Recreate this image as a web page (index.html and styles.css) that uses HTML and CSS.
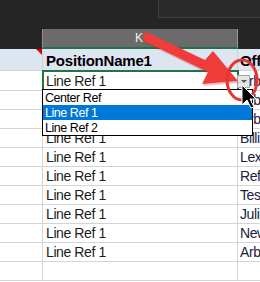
FILE: index.html
```html
<!DOCTYPE html>
<html lang="en">
<head>
    <meta charset="UTF-8">
    <meta name="viewport" content="width=device-width, initial-scale=1.0">
    <link rel="stylesheet" href="styles.css">
    <title>Lista desplegable</title>
</head>
<body>
    <div class="sheet">

        <!-- zona oscura de arriba -->
        <div class="topbar">
            <div class="topbox"></div>
        </div>

        <!-- cabeceras de columna -->
        <div class="colheads">
            <div class="ch ch-j"></div>
            <div class="ch ch-k">K</div>
            <div class="ch ch-l"></div>
        </div>

        <!-- filas -->
        <div class="grid">
            <div class="row row-head">
                <div class="cell cj"><span class="comment"></span></div>
                <div class="cell ck">PositionName1</div>
                <div class="cell cl">Office</div>
            </div>
            <div class="row row-sel">
                <div class="cell cj"></div>
                <div class="cell ck selected">Line Ref 1</div>
                <div class="cell cl">Arbor</div>
            </div>
            <!-- estas dos quedan tapadas por la lista -->
            <div class="row"><div class="cell cj"></div><div class="cell ck"></div><div class="cell cl">Arbor</div></div>
            <div class="row"><div class="cell cj"></div><div class="cell ck"></div><div class="cell cl">Arbor</div></div>
            <div class="row"><div class="cell cj"></div><div class="cell ck">Line Ref 1</div><div class="cell cl">Billing</div></div>
            <div class="row"><div class="cell cj"></div><div class="cell ck">Line Ref 1</div><div class="cell cl">Lexington</div></div>
            <div class="row"><div class="cell cj"></div><div class="cell ck">Line Ref 1</div><div class="cell cl">Reference</div></div>
            <div class="row"><div class="cell cj"></div><div class="cell ck">Line Ref 1</div><div class="cell cl">Testing</div></div>
            <div class="row"><div class="cell cj"></div><div class="cell ck">Line Ref 1</div><div class="cell cl">Julie</div></div>
            <div class="row"><div class="cell cj"></div><div class="cell ck">Line Ref 1</div><div class="cell cl">Newton</div></div>
            <div class="row"><div class="cell cj"></div><div class="cell ck">Line Ref 1</div><div class="cell cl">Arbor</div></div>
            <div class="row"><div class="cell cj"></div><div class="cell ck"></div><div class="cell cl"></div></div>
        </div>

        <!-- boton del desplegable -->
        <div class="dropbtn"><span class="tri"></span></div>

        <!-- lista abierta -->
        <ul class="droplist">
            <li>Center Ref</li>
            <li class="active">Line Ref 1</li>
            <li>Line Ref 2</li>
        </ul>

        <!-- flecha, circulo y puntero -->
        <svg class="marks" width="260" height="282" viewBox="0 0 260 282">
            <path d="M146 32 L205 60 L213 51 L238 81 L202 84 L208 72 L148 43 A6 6 0 0 1 146 32 Z" fill="#a02020" opacity="0.25" transform="translate(1 2)"/>
            <path d="M146 32 L205 60 L213 51 L238 81 L202 84 L208 72 L148 43 A6 6 0 0 1 146 32 Z" fill="#f03c3a"/>
            <ellipse cx="242" cy="80" rx="15" ry="20" fill="none" stroke="#e8342f" stroke-width="3"/>
            <path d="M242 85 L242 105 L247 100 L251 108 L254 107 L250 99 L256 99 Z" fill="#000" stroke="#fff" stroke-width="1"/>
        </svg>
    </div>
</body>
</html>
```

FILE: styles.css
```css
body {
    margin: 0;
    background-color: #ffffff;
    font-family: "Liberation Sans", Arial, sans-serif;
}

.sheet {
    position: relative;
    width: 260px;
    height: 282px;
    overflow: hidden;
    background-color: #ffffff;
}

.topbar {
    height: 29px;
    background-color: #252525;
    display: flex;
    justify-content: flex-end;
}

.topbox {
    width: 101px;
    height: 17px;
    background-color: #2b2b2b;
    border-left: 1px solid #3f3f3f;
    border-bottom: 1px solid #3f3f3f;
}

.colheads {
    display: grid;
    grid-template-columns: 42px 196px 1fr;
    height: 20px;
    background-color: #262626;
}

.ch {
    height: 18px;
}

.ch-k {
    background-color: #6b6b6b;
    border-left: 1px solid #8e8e8e;
    border-right: 1px solid #9a9a9a;
    border-bottom: 2px solid #217346;
    color: #f2f2f2;
    font-size: 12px;
    line-height: 18px;
    padding-left: 92px;
}

.grid {
    display: flex;
    flex-direction: column;
}

.row {
    display: grid;
    grid-template-columns: 43px 195px 1fr;
    height: 19px;
}

.cell {
    border-bottom: 1px solid #d4d4d4;
    font-size: 14px;
    letter-spacing: -0.4px;
    line-height: 18px;
    white-space: nowrap;
    overflow: hidden;
    color: #1c1c1c;
}

.cj {
    border-right: 1px solid #d4d4d4;
}

.ck {
    border-right: 1px solid #d4d4d4;
    padding-left: 3px;
}

.cl {
    padding-left: 2px;
    color: #17233d;
}

.row-head {
    height: 22px;
    background-color: #dde5f1;
}

.row-head .cell {
    font-weight: bold;
    font-size: 15px;
    letter-spacing: -0.2px;
    line-height: 19px;
    padding-top: 2px;
    color: #000000;
}

.row-head .cj {
    position: relative;
}

.comment {
    position: absolute;
    top: 0;
    right: 0;
    width: 0;
    height: 0;
    border-top: 6px solid #e00000;
    border-left: 6px solid transparent;
}

.row-sel {
    height: 20px;
}

.row-sel .cell {
    padding-top: 1px;
}

.selected {
    position: relative;
    z-index: 1;
    outline: 2px solid #217346;
    outline-offset: -1px;
}

.dropbtn {
    position: absolute;
    left: 237px;
    top: 75px;
    width: 11px;
    height: 11px;
    background-color: #e4e4e4;
    border: 1px solid #a5a5a5;
    display: flex;
    align-items: center;
    justify-content: center;
    z-index: 2;
}

.tri {
    width: 0;
    height: 0;
    border-left: 3px solid transparent;
    border-right: 3px solid transparent;
    border-top: 3px solid #555555;
}

.droplist {
    position: absolute;
    left: 42px;
    top: 89px;
    width: 209px;
    margin: 0;
    padding: 0;
    list-style: none;
    background-color: #ffffff;
    border: 1px solid #000000;
    z-index: 3;
}

.droplist li {
    height: 15px;
    padding: 1px 0 0 2px;
    box-sizing: border-box;
    font-size: 12.5px;
    letter-spacing: -0.45px;
    line-height: 14px;
    color: #000000;
}

.droplist .active {
    background-color: #0078d7;
    color: #ffffff;
}

.marks {
    position: absolute;
    left: 0;
    top: 0;
    z-index: 4;
    pointer-events: none;
}
```
